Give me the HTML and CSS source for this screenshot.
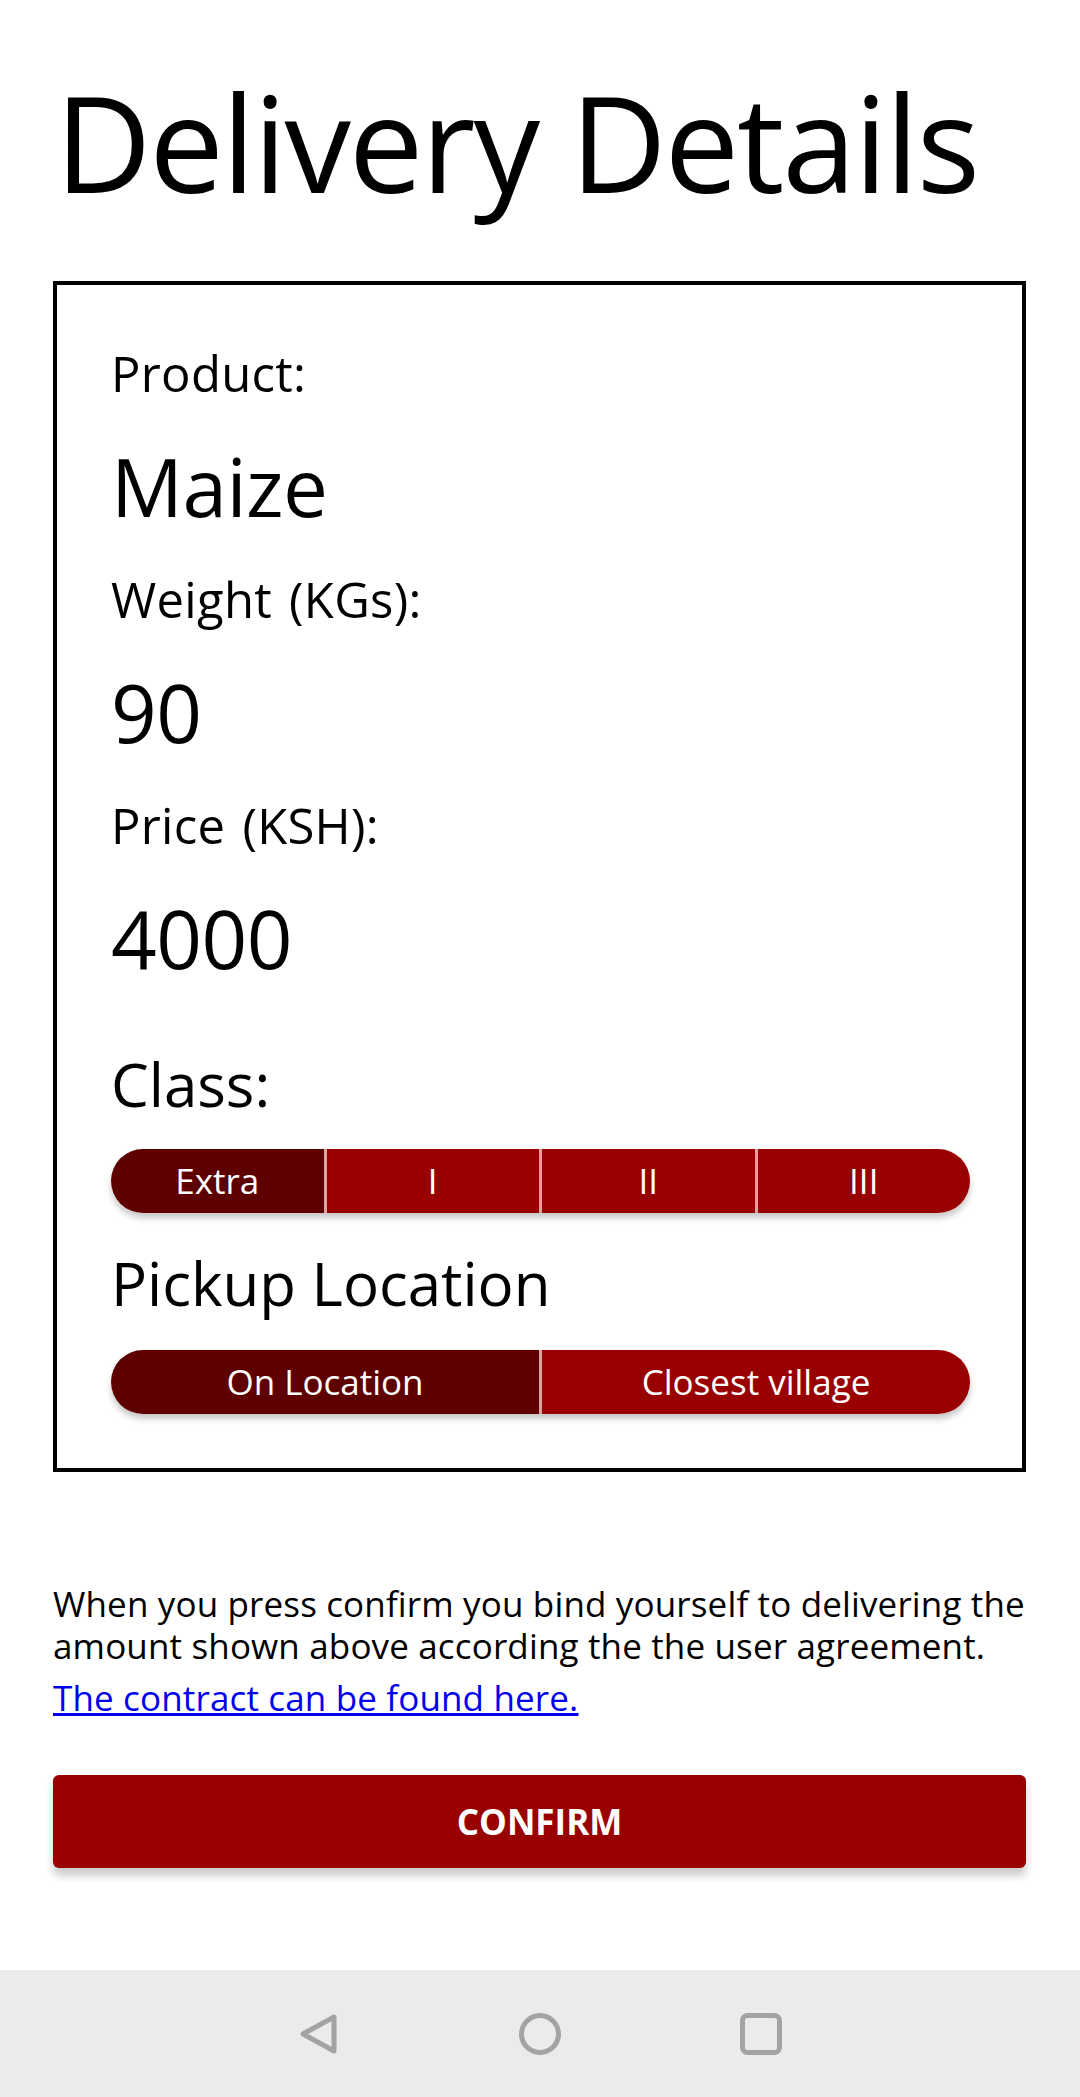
FILE: index.html
```html
<!DOCTYPE html>
<html lang="en">
<head>
<meta charset="utf-8">
<title>Delivery Details</title>
<link rel="stylesheet" href="styles.css">
</head>
<body>
<div class="screen">
  <main class="content">
    <h1 class="title">Delivery Details</h1>
    <section class="card">
      <div class="label">Product:</div>
      <div class="value">Maize</div>
      <div class="label gap">Weight (KGs):</div>
      <div class="value">90</div>
      <div class="label gap">Price (KSH):</div>
      <div class="value">4000</div>
      <div class="heading class-heading">Class:</div>
      <div class="segmented seg-class">
        <div class="seg selected"><span>Extra</span></div>
        <div class="seg"><span>I</span></div>
        <div class="seg"><span>II</span></div>
        <div class="seg"><span>III</span></div>
      </div>
      <div class="heading pickup-heading">Pickup Location</div>
      <div class="segmented seg-pickup">
        <div class="seg selected"><span>On Location</span></div>
        <div class="seg"><span>Closest village</span></div>
      </div>
    </section>
    <p class="notice">When you press confirm you bind yourself to delivering the<br>amount shown above according the the user agreement.</p>
    <a class="contract" href="#">The contract can be found here.</a>
    <button class="confirm" type="button">CONFIRM</button>
  </main>
  <nav class="navbar">
    <div class="nav-item">
      <svg width="44" height="44" viewBox="0 0 44 44"><path d="M37 5 L6 22 L37 39 Z" fill="none" stroke="#a3a3a3" stroke-width="5" stroke-linejoin="round"/></svg>
    </div>
    <div class="nav-item">
      <svg width="44" height="44" viewBox="0 0 44 44"><circle cx="22" cy="22" r="18.5" fill="none" stroke="#a3a3a3" stroke-width="5"/></svg>
    </div>
    <div class="nav-item">
      <svg width="44" height="44" viewBox="0 0 44 44"><rect x="3.5" y="3.5" width="37" height="37" rx="5" fill="none" stroke="#a3a3a3" stroke-width="5"/></svg>
    </div>
  </nav>
</div>
</body>
</html>
```

FILE: styles.css
```css
html, body {
  margin: 0;
  padding: 0;
  background: #ffffff;
}

body {
  font-family: "Open Sans", "Noto Sans", sans-serif;
  color: #000;
}

.screen {
  width: 1080px;
  height: 2097px;
  display: flex;
  flex-direction: column;
}

.content {
  flex: 1;
  padding: 0 54px 0 53px;
  display: flex;
  flex-direction: column;
}

.title {
  margin: 62px 0 0 2px;
  font-size: 133px;
  line-height: 160px;
  font-weight: 400;
  letter-spacing: -2.2px;
}

.card {
  margin-top: 59px;
  border: 4px solid #000;
  padding: 58px 50px 54px 54px;
  display: flex;
  flex-direction: column;
}

.label {
  font-size: 49px;
  line-height: 60px;
  word-spacing: 4px;
  letter-spacing: 0.3px;
}

.label.gap {
  margin-top: 33px;
}

.value {
  margin-top: 33px;
  font-size: 80px;
  line-height: 100px;
  letter-spacing: -0.5px;
}

.heading {
  font-size: 60px;
  line-height: 72px;
}

.class-heading {
  margin-top: 60px;
}

.pickup-heading {
  margin-top: 34px;
}

.segmented {
  display: flex;
  height: 64px;
  margin-right: 2px;
  border-radius: 32px;
  overflow: hidden;
  box-shadow: 0 5px 6px rgba(0, 0, 0, 0.22);
}

.seg-class {
  margin-top: 29px;
}

.seg-pickup {
  margin-top: 31px;
}

.seg {
  flex: 1;
  background: #990000;
  color: #fff;
  font-size: 35px;
  display: flex;
  align-items: center;
  justify-content: center;
  border-left: 3px solid #dca3a3;
}

.seg span {
  line-height: 44px;
}

.seg:first-child {
  border-left: none;
}

.seg.selected {
  background: #5f0000;
}

.notice {
  margin: 111px 0 0 0;
  font-size: 35px;
  line-height: 42px;
  letter-spacing: 0.15px;
}

.contract {
  margin-top: 10px;
  font-size: 35px;
  line-height: 42px;
  color: #0000ee;
  text-decoration: underline;
  align-self: flex-start;
  letter-spacing: 0.15px;
}

.confirm {
  margin-top: 56px;
  height: 93px;
  border: none;
  border-radius: 6px;
  background: #990000;
  color: #fff;
  font-family: "Open Sans", "Noto Sans", sans-serif;
  font-weight: 700;
  font-size: 35px;
  box-shadow: 0 8px 8px rgba(0, 0, 0, 0.2);
}

.navbar {
  height: 127px;
  background: #ebebeb;
  display: flex;
  justify-content: center;
  align-items: center;
}

.nav-item {
  width: 221px;
  display: flex;
  justify-content: center;
  align-items: center;
}

.nav-item svg {
  display: block;
}
```
